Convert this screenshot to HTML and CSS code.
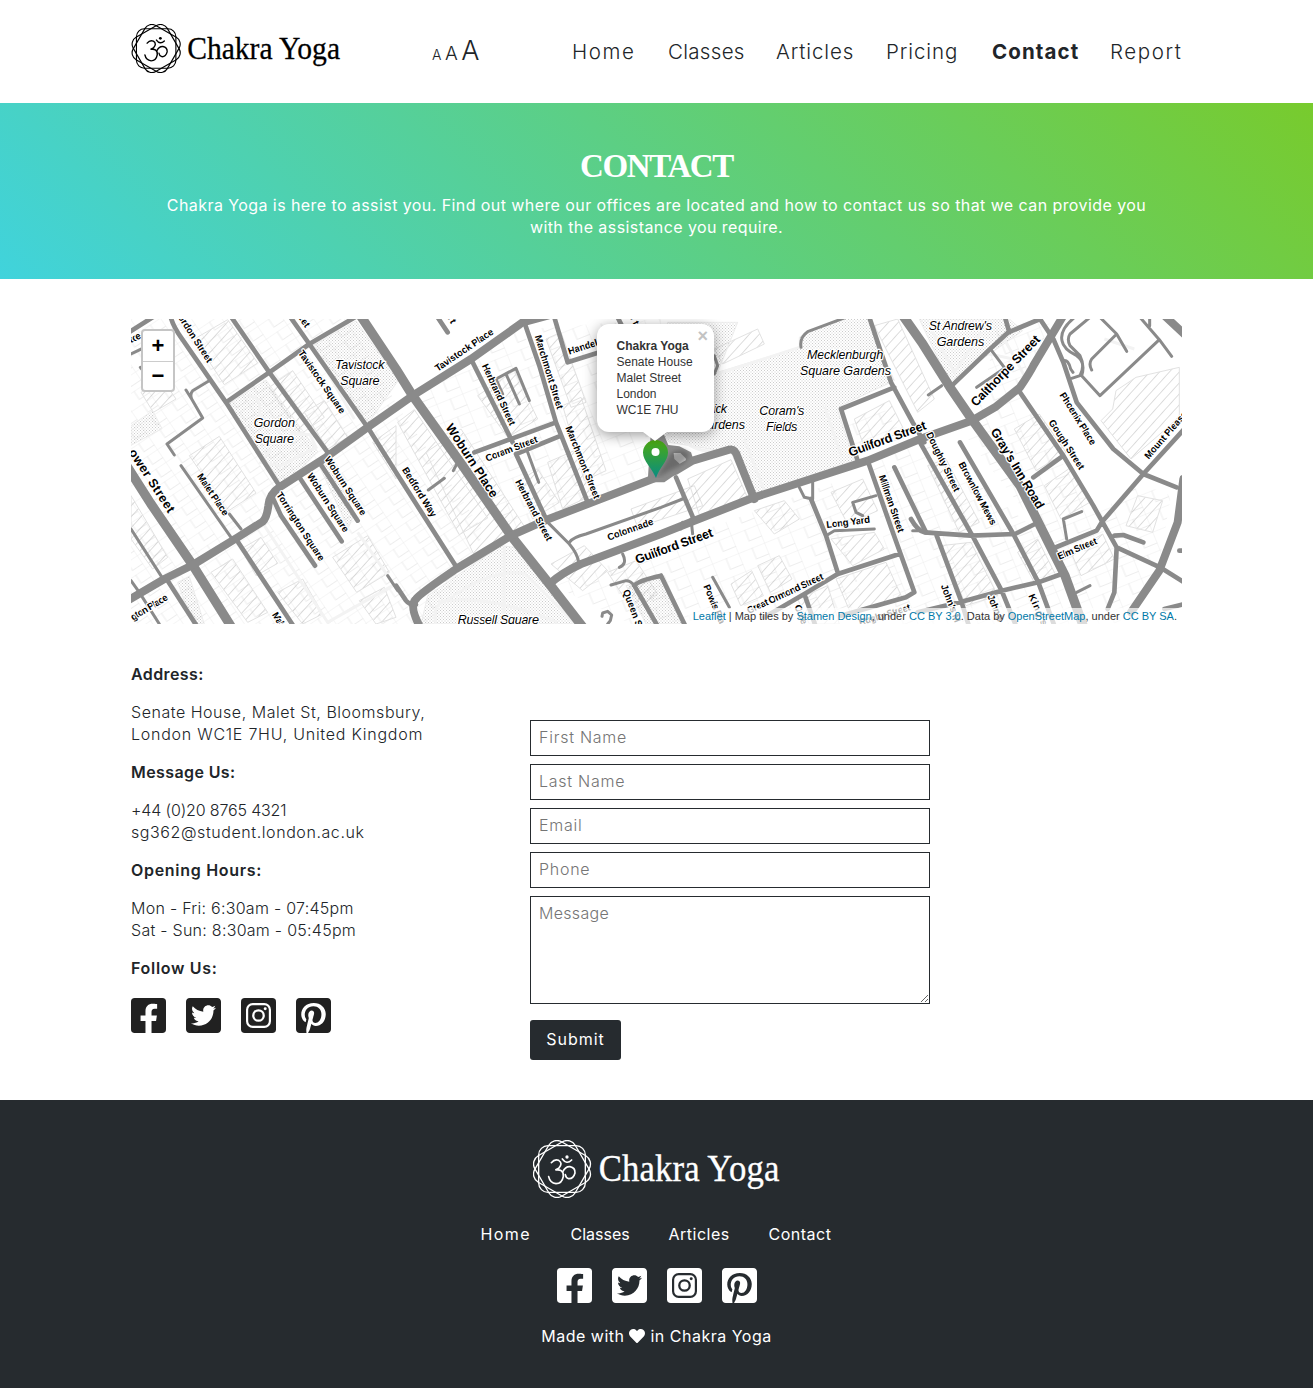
FILE: index.html
```html
<!DOCTYPE html>
<html lang="en">
<head>
<meta charset="utf-8">
<title>Chakra Yoga - Contact</title>
<link rel="stylesheet" href="styles.css">
</head>
<body>
<svg class="sprite" width="0" height="0" aria-hidden="true">
  <symbol id="logo" viewBox="39 30 741 174">
    <g fill="none" stroke="currentColor" stroke-width="4">
      <rect x="56" y="47" width="140" height="140" rx="28"/>
      <rect x="56" y="47" width="140" height="140" rx="28" transform="rotate(30 126 117)"/>
      <rect x="56" y="47" width="140" height="140" rx="28" transform="rotate(60 126 117)"/>
      <g stroke-width="5" stroke-linecap="round">
        <path d="M94 98Q104 86 116 91Q130 100 116 115L106 120Q131 116 130 139Q126 161 108 161Q90 159 86 140"/>
        <path d="M128 126Q136 109 150 110Q166 113 165 129Q160 147 146 146Q137 143 136 134"/>
        <path d="M127 87Q140 105 155 90"/>
      </g>
    </g>
    <circle cx="141" cy="81" r="5" fill="currentColor"/>
    <text x="236" y="153" font-size="112" textLength="543" lengthAdjust="spacingAndGlyphs" fill="currentColor" stroke="currentColor" stroke-width="1" font-family="Liberation Serif, serif">Chakra Yoga</text>
  </symbol>
  <symbol id="facebook" viewBox="0 32 448 448"><path fill="currentColor" d="M400 32H48A48 48 0 0 0 0 80v352a48 48 0 0 0 48 48h137.25V327.69h-63V256h63v-54.64c0-62.15 37-96.48 93.67-96.48 27.14 0 55.52 4.84 55.52 4.84v61h-31.27c-30.81 0-40.42 19.12-40.42 38.73V256h68.78l-11 71.69h-57.78V480H400a48 48 0 0 0 48-48V80a48 48 0 0 0-48-48z"/></symbol>
  <symbol id="twitter" viewBox="0 32 448 448"><path fill="currentColor" d="M400 32H48C21.5 32 0 53.5 0 80v352c0 26.5 21.5 48 48 48h352c26.5 0 48-21.5 48-48V80c0-26.5-21.5-48-48-48zm-48.900 158.800c.2 2.800.2 5.700.2 8.500 0 86.700-66 186.600-186.600 186.600-37.200 0-71.700-10.800-100.700-29.400 5.300.6 10.400.8 15.800.8 30.700 0 58.900-10.400 81.400-28-28.800-.6-53-19.500-61.300-45.500 10.100 1.500 19.200 1.500 29.600-1.200-30-6.100-52.500-32.500-52.500-64.400v-.8c8.700 4.900 18.900 7.900 29.600 8.300a65.447 65.447 0 0 1-29.200-54.600c0-12.200 3.200-23.400 8.900-33.100 32.300 39.800 80.800 65.800 135.200 68.600-9.300-44.500 24-80.600 64-80.600 18.900 0 35.900 7.900 47.900 20.700 14.800-2.800 29-8.300 41.600-15.800-4.900 15.200-15.200 28-28.800 36.100 13.200-1.400 26-5.100 37.800-10.200-8.900 13.100-20.100 24.700-32.900 34z"/></symbol>
  <symbol id="instagram" viewBox="0 32 448 448">
    <rect y="32" width="448" height="448" rx="48" fill="currentColor"/>
    <g fill="none" stroke="var(--cut)"><rect x="78" y="110" width="292" height="292" rx="72" stroke-width="28"/><circle cx="224" cy="256" r="67" stroke-width="29"/></g>
    <circle cx="310" cy="170" r="19" fill="var(--cut)"/>
  </symbol>
  <symbol id="pinterest" viewBox="0 32 448 448"><path fill="currentColor" d="M448 80v352c0 26.500-21.500 48-48 48H154.400c9.800-16.400 22.400-40 27.400-59.300 3-11.500 15.300-58.400 15.300-58.400 8 15.300 31.400 28.200 56.300 28.200 74.100 0 127.400-68.100 127.400-152.700 0-81.100-66.200-141.800-151.400-141.800-106 0-162.200 71.100-162.200 148.600 0 36 19.200 80.800 49.800 95.100 4.700 2.200 7.100 1.200 8.200-3.300.8-3.400 5-20.100 6.800-27.800.6-2.500.3-4.600-1.700-7-10.100-12.300-18.300-34.900-18.300-56 0-54.200 41-106.600 110.900-106.600 60.300 0 102.600 41.100 102.600 99.900 0 66.400-33.500 112.400-77.200 112.400-24.100 0-42.100-19.900-36.400-44.400 6.900-29.200 20.300-60.700 20.300-81.800 0-53-75.500-45.700-75.500 25 0 21.700 7.300 36.500 7.300 36.500-31.400 132.800-36.100 134.500-29.600 192.600l2.200.8H48c-26.500 0-48-21.500-48-48V80c0-26.500 21.500-48 48-48h352c26.500 0 48 21.500 48 48z"/></symbol>
</svg>

<header class="header">
  <div class="container header-row">
    <a class="brand"><svg><use href="#logo"/></svg></a>
    <div class="sizes"><span class="size-s">A</span><span class="size-m">A</span><span class="size-l">A</span></div>
    <nav class="nav"><a class="wide">Home</a><a class="tight">Classes</a><a>Articles</a><a>Pricing</a><a class="active">Contact</a><a class="wide">Report</a></nav>
  </div>
</header>

<section class="banner">
  <h1>CONTACT</h1>
  <p>Chakra Yoga is here to assist you. Find out where our offices are located and how to contact us so that we can provide you<br>with the assistance you require.</p>
</section>

<main class="container">
  <div class="map">
    <svg class="tiles" viewBox="0 0 3153 915">
      <defs>
        <pattern id="dots" width="9" height="9" patternUnits="userSpaceOnUse"><path d="M0 0h3v3H0zM4.500 4.500h3v3h-3z" fill="#ccc"/></pattern>
        <pattern id="hatch" width="22" height="26" patternUnits="userSpaceOnUse" patternTransform="rotate(42)"><path d="M0 0V26" stroke="#bbb" stroke-width="3"/></pattern>
        <pattern id="lots" width="76" height="46" patternUnits="userSpaceOnUse" patternTransform="rotate(-34)"><path d="M0 0H76V46M38 0V30H76" fill="none" stroke="#ededed" stroke-width="3"/></pattern>
        <pattern id="lots2" width="84" height="58" patternUnits="userSpaceOnUse" patternTransform="rotate(-22)"><path d="M0 0H84V58M42 0V36H84" fill="none" stroke="#ededed" stroke-width="3"/></pattern>
      </defs>
      <path fill="url(#lots)" d="M0 0H650L800 260L1060 640L900 915H0Z"/>
      <path fill="url(#lots2)" d="M850 240L1170 20L1370 550L1150 640ZM1190 30L1590 0V450L1380 540ZM1270 800L1590 680L2110 490L2200 880L1500 915ZM2130 320L2260 270L2320 360L2160 410ZM2220 430L2380 370L2790 690L2850 915H2300ZM2480 320L2660 220L2900 600L2770 690ZM2600 20L2760 0L2690 200L2540 290ZM2770 690L3020 490L3120 530L3080 760L2960 915H2850Z"/>
      <g class="building">
        <path d="M190 60l100-58 90 130-100 65zM30 220l60-45 45 65-68 40zM0 530l45 75 65 110-45 35L0 660zM175 410l90-58 110 170-85 55zM415 205l70-50 95 140-70 50zM520 280l60-35 70 110-60 35zM330 690l60-35 50 78-65 37zM240 760l65-40 105 160-60 30zM605 715l105-65 65 110-98 60zM440 820l75-40 60 105-60 30zM685 845l75-40 35 90-60 20zM725 370l70-50v160z"/>
        <path d="M885 400l105-70 195 300-150 90zM800 310l50-38 220 325-85 50zM1040 230l110-75 70 145-90 55zM1245 60l45-20 75 210-45 15zM1295 260l55-25 75 220-65 30zM1250 430l80-35 60 130-95 45zM1160 490l60-40 65 100-80 50zM1260 735l100-55 70 75-75 60zM1500 570l190-70 25 60-195 65zM1430 760l85-35 65 100-75 50z"/>
        <path d="M1670 480l130-58 50 115-145 50zM1750 90l130-60 20 45-125 60zM1870 575l90-30 45 55-75 45zM1880 740l65-30 38 70-65 40zM1800 795l62-40 35 75-68 30zM2100 520l95-40 45 95-90 40zM2115 780l150-50 50 110-155 45zM2100 660l130-20 30 50-95 50zM2170 300l105-55 45 90-120 50zM2000 840l90-40 35 115h-90z"/>
        <path d="M2390 440l55-20 100 190-60 30zM2230 20l70-20 110 240-50 40zM2650 330l75-45 80 115-90 55zM2740 500l80-55 65 100-95 55zM2430 680l90-10 80 160-95 30zM2660 700l60-40 55 110-65 20zM2910 305l35-35 10-55 60-40 130-30v150l-145 125zM3020 530l75 15-30 95-80-20zM2820 700l95-55 35 75-100 50z"/>
      </g>
      <g class="park">
        <path d="M292 255l113-72 155 215-103 104zM548 78L675 6l127 178-98 140zM562 435l30-9 78 156-18 45zM0 320l65-45 28 54-93 50zM140 790l35-18 45 143h-35z"/>
        <path d="M890 830l220-150 65 8 160 227H870zM1610 10h210l-60 150 245-75 0-30 30-20 110-40h65l80 190-150 70-20 20 50 150-310 105-60-130-185-30-55-65zM1600 770l60 145h-115l-60-115zM2365 0h270l40 35-220 155z"/>
      </g>
      <g class="paths">
        <path d="M350 230q45 0 34 60 50 20 72 70M420 390l-30 40 60 10 105-55-18-38-60-5M555 100l115 200M400 620l190 290 195-110M680 640l90 130M915 915q-15-60 35-72 130-95 230-80 110 105 150 152M1120 685l-2 230M920 850q140-30 360 60M1640 350q70 70 155 35M1760 165L2005 85M1840 360l60 155M2080 260l50 150M2400 30l70 130 80-120"/>
        <path d="M1590 170q80 80 20 190M2575 105l95 20M2620 60l60 110M2920 60l90 30"/>
      </g>
      <g class="roads">
        <g stroke-width="28"><path d="M-10 445L60 555 185 738 305 930M685-15L795 150 845 230 995 440 1140 650 1255 795 1360 930M2312-15L2372 70 2457 205 2522 300 2667 500 2717 600 2767 700 2802 770 2860 930"/></g>
        <g stroke-width="24">
          <path d="M-10 845L100 780 185 738 320 655 395 608Q408 595 412 560 415 525 445 505L585 415 710 325 845 230 1020 120 1175 10 1250-10"/>
          <path d="M870 930Q832 860 855 840 865 825 975 750L1140 650 1245 603 1370 555 1590 470 1635 455 1685 425 1795 392Q1812 388 1820 415L1870 540"/>
          <path d="M1255 795Q1295 760 1350 735L1590 645 1690 605 1870 535 2040 480 2210 425 2367 360 2522 305 2592 265 2667 205Q2697 160 2707 140L2797-10M3157 480L3140 610 3085 755 3000 880M3095-15L3165 50"/>
        </g>
        <path fill="#8a8a8a" fill-rule="evenodd" stroke="none" d="M1560 330L1598 345 1612 378 1645 382 1680 400 1690 430 1650 455 1600 490 1550 490ZM1628 402L1630 420 1650 438 1666 434 1664 418 1648 402Z"/>
        <g stroke-width="14">
          <path d="M118-10Q125 20 150 55L285 250 445 500M298-10L415 160 590 400M475-10L535 75 710 325 795 460 980 750M285 250L415 160 535 75 680-10M420 525L450 590 552 740M505 475L632 667M565 430L680 605M315 660L490 925M110 785L200 925M-10 42L65-5M795 800L825 845Q835 858 855 857"/>
          <path d="M1020 120L1080 240 1145 370M1155 405L1245 600M1030 400L1145 358 1275 310M1155 405L1290 350M1180 10L1225 140 1275 310 1370 550M1270-5L1310 130 1420 95M1460-5L1475 25M920-5L950 40M1590 770L1665 925M1510 800L1585 930M1510 800Q1520 785 1590 770M1635 475L1690 605M2215-5L2280 190 2345 310 2380 370M2290 205L2130 270 2180 425M2210 425L2280 625 2350 820 2325 835 2130 890M2290 445L2385 640M2040 540L2085 650 2120 760M1900 895L2020 825 2120 765 2305 705M2020 825L2055 925"/>
          <path d="M2367 370L2527 655 2612 815 2657 925M2487 370L2647 645 2722 790 2772 925M2340 600Q2360 635 2380 640L2520 650 2652 645 2712 615M2417 650L2492 850 2515 925M2360 880L2492 848 2612 815 2722 790 2792 765M2457 205L2572 95 2632 40 2727 0M2622-5L2635 40M2727 0L2767 60 2797 130 2837 250 2947 390 3037 465 3137 505M2667 220L2797 410 2887 560 2957 685 3087 745 3160 790M2797 410L2707 475M2762 690L2897 635 2912 610 3037 465 3160 330M2957 685L2950 820 2930 870M2950 650L2977 648 3037 670M3100 870L3160 855M3145 695H3165"/>
        </g>
        <g stroke-width="9">
          <path d="M150 440L300 655M295 585L330 630M232 187L185 215Q176 225 182 240L215 297 108 375 130 408M165 213L182 240M0 630L95 778M0 785L25 820L85 915M0 105L35 88M770 770L800 815M28 145L40 160"/>
          <path d="M1245 605L1315 675Q1340 705 1343 730M1315 670Q1325 655 1365 645L1590 565 1655 540M1095 180L1155 148 1195 245M1125 165L1165 255M1095 180L1115 225M1190 400L1223 490M892 513L940 478M967 455L980 430M1440 798L1485 785Q1500 785 1510 800M1475 705Q1490 735 1465 745"/>
          <path d="M1413 892L1415 882 1430 877 1442 888 1438 905 1430 915"/>
          <path d="M1750 110L1760 140 1750 165M2010 85Q2005 55 2030 38L2145-5M2005 505L2020 535 2045 540 2045 485M2085 650L2110 635 2230 630M2235 530L2165 550 2175 580 2195 590M1745 775L1795 865M2345 635H2385M1650 630L1655 610M1685 645L1680 600"/>
          <path d="M2582 95L2627 155M2537 205L2617 150M2837-10Q2785 30 2793 65 2797 90 2837 110 2867 130 2847 170L2822 178M2877-5L2817 45Q2807 60 2817 80L2847 110Q2862 140 2852 170L2907 230 3085 62 3027-5M3085 62L3122 112M2907-5L2957 45 2987 97M2957 45L2882 120Q2872 135 2882 153M2797 125Q2812 120 2819 150L2826 160M2852 578L2797 600 2807 660M2837 820L2877 800M2392 228L2432 200M3056-5V20"/>
        </g>
      </g>
      <g class="street">
        <text transform="translate(140 -5) rotate(57)" textLength="165">ordon Street</text>
        <text transform="translate(500 -5) rotate(55)" textLength="40">eet</text>
        <text transform="translate(500 102) rotate(55)" textLength="225">Tavistock Square</text>
        <text transform="translate(197 472) rotate(56)" textLength="145">Malet Place</text>
        <text transform="translate(435 527) rotate(57)" textLength="240">Torrington Square</text>
        <text transform="translate(527 470) rotate(57)" textLength="205">Woburn Square</text>
        <text transform="translate(580 420) rotate(57)" textLength="205">Woburn Square</text>
        <text transform="translate(6 905) rotate(-31)" textLength="125">gton Place</text>
        <text transform="translate(0 72) rotate(-25)" textLength="35">ace</text>
        <text transform="translate(422 887) rotate(58)" textLength="60">Malet</text>
        <text transform="translate(920 158) rotate(-34)" textLength="205">Tavistock Place</text>
        <text transform="translate(1052 140) rotate(65)" textLength="200">Herbrand Street</text>
        <text transform="translate(1211 52) rotate(73)" textLength="230">Marchmont Street</text>
        <text transform="translate(1303 326) rotate(68)" textLength="232">Marchmont Street</text>
        <text transform="translate(1068 428) rotate(-21)" textLength="165">Coram Street</text>
        <text transform="translate(1152 488) rotate(62)" textLength="204">Herbrand Street</text>
        <text transform="translate(812 452) rotate(58)" textLength="170">Bedford Way</text>
        <text transform="translate(1315 107) rotate(-18)" textLength="125">Handel St</text>
        <text transform="translate(945 -10) rotate(60)" textLength="30">et</text>
        <text transform="translate(1493 -12) rotate(65)" textLength="35">nt</text>
        <text transform="translate(1433 665) rotate(-20)" textLength="145">Colonnade</text>
        <text transform="translate(1475 816) rotate(69)" textLength="135">Queen Sq</text>
        <text transform="translate(1717 802) rotate(67)" textLength="125">Powis Pla</text>
        <text transform="translate(1853 885) rotate(-25)" textLength="250">Great Ormond Street</text>
        <text transform="translate(2087 627) rotate(-7)" textLength="132">Long Yard</text>
        <text transform="translate(2243 472) rotate(71)" textLength="180">Millman Street</text>
        <text transform="translate(1990 862) rotate(68)" textLength="60">Orde</text>
        <text transform="translate(2187 920) rotate(-17)" textLength="160">Rugby Street</text>
        <text transform="translate(2385 345) rotate(64)" textLength="195">Doughty Street</text>
        <text transform="translate(2482 435) rotate(62)" textLength="210">Brownlow Mews</text>
        <text transform="translate(2785 228) rotate(58)" textLength="180">Phoenix Place</text>
        <text transform="translate(2752 310) rotate(57)" textLength="172">Gough Street</text>
        <text transform="translate(3053 422) rotate(-49)" textLength="205">Mount Pleasant</text>
        <text transform="translate(2785 722) rotate(-23)" textLength="125">Elm Street</text>
        <text transform="translate(2429 800) rotate(69)" textLength="120">John's M</text>
        <text transform="translate(2569 832) rotate(68)" textLength="85">John S</text>
        <text transform="translate(2692 830) rotate(66)" textLength="100">King's</text>
      </g>
      <g class="street main">
        <text transform="translate(-8 400) rotate(57)" textLength="220">ower Street</text>
        <text transform="translate(943 325) rotate(57)" textLength="255">Woburn Place</text>
        <text transform="translate(1518 735) rotate(-20)" textLength="245">Guilford Street</text>
        <text transform="translate(2158 413) rotate(-20)" textLength="245">Guilford Street</text>
        <text transform="translate(2535 265) rotate(-46)" textLength="280">Calthorpe Street</text>
        <text transform="translate(2578 337) rotate(59)" textLength="275">Gray's Inn Road</text>
      </g>
      <g class="place">
        <text x="612" y="150" textLength="149">Tavistock</text><text x="628" y="198" textLength="118">Square</text>
        <text x="368" y="325" textLength="124">Gordon</text><text x="371" y="373" textLength="118">Square</text>
        <text x="980" y="914" textLength="244">Russell Square</text>
        <text x="1748" y="283" textLength="40">ick</text><text x="1729" y="331" textLength="113">ardens</text>
        <text x="1885" y="289" textLength="135">Coram's</text><text x="1905" y="337" textLength="94">Fields</text>
        <text x="2028" y="119" textLength="229">Mecklenburgh</text><text x="2007" y="167" textLength="273">Square Gardens</text>
        <text x="2393" y="32" textLength="190">St Andrew's</text><text x="2417" y="80" textLength="143">Gardens</text>
      </g>
    </svg>
    <div class="zoom-control"><a>+</a><a>−</a></div>
    <svg class="marker" viewBox="0 0 56 38">
      <defs><linearGradient id="pin" x1="0" y1="0" x2="0" y2="1"><stop offset="0" stop-color="#4daa10"/><stop offset="1" stop-color="#078d83"/></linearGradient><filter id="soft"><feGaussianBlur stdDeviation="2"/></filter></defs>
      <path d="M13 38L28 13Q42 6 46 15 44 24 30 29Z" fill="#555" opacity=".6" filter="url(#soft)"/>
      <path d="M13 38C9 28 0 21 0 12.500A12.500 12.500 0 0 1 25 12.500C25 21 16 28 13 38Z" fill="url(#pin)"/>
      <circle cx="12.500" cy="12" r="4" fill="#fff"/>
    </svg>
    <div class="popup"><b>Chakra Yoga</b><br>Senate House<br>Malet Street<br>London<br>WC1E 7HU<span class="close">×</span></div>
    <div class="attribution"><a>Leaflet</a> | Map tiles by <a>Stamen Design</a>, under <a>CC BY 3.0</a>. Data by <a>OpenStreetMap</a>, under <a>CC BY SA</a>.</div>
  </div>

  <div class="details">
    <section class="info">
      <p><b>Address:</b></p>
      <p><span class="t-street">Senate House, Malet St, Bloomsbury,</span><br><span class="t-city">London WC1E 7HU, United Kingdom</span></p>
      <p><b>Message Us:</b></p>
      <p><span class="t-phone">+44 (0)20 8765 4321</span><br><span class="t-mail">sg362@student.london.ac.uk</span></p>
      <p><b class="t-title">Opening Hours:</b></p>
      <p class="t-hours">Mon - Fri: 6:30am - 07:45pm<br>Sat - Sun: 8:30am - 05:45pm</p>
      <p><b class="t-title">Follow Us:</b></p>
      <div class="social"><svg><use href="#facebook"/></svg><svg><use href="#twitter"/></svg><svg><use href="#instagram"/></svg><svg><use href="#pinterest"/></svg></div>
    </section>
    <form class="form">
      <input placeholder="First Name">
      <input placeholder="Last Name">
      <input placeholder="Email">
      <input placeholder="Phone">
      <textarea placeholder="Message"></textarea>
      <button type="button">Submit</button>
    </form>
  </div>
</main>

<footer class="footer">
  <svg class="footer-logo"><use href="#logo"/></svg>
  <nav class="footer-nav"><a class="wide">Home</a><a class="tight">Classes</a><a>Articles</a><a>Contact</a></nav>
  <div class="social"><svg><use href="#facebook"/></svg><svg><use href="#twitter"/></svg><svg><use href="#instagram"/></svg><svg><use href="#pinterest"/></svg></div>
  <p class="made">Made with <svg viewBox="0 0 512 512"><path fill="currentColor" d="M462.300 62.600C407.500 15.900 326 24.300 275.700 76.200L256 96.500l-19.700-20.300C186.100 24.300 104.500 15.900 49.700 62.600c-62.800 53.600-66.100 149.800-9.900 207.900l193.500 199.800c12.500 12.900 32.800 12.900 45.300 0l193.500-199.800c56.300-58.100 53-154.300-9.800-207.900z"/></svg> in Chakra Yoga</p>
</footer>
</body>
</html>
```
FILE: styles.css
```css
* { box-sizing: border-box; }
body { margin: 0; font: 300 16px/22px Inter, "Open Sans", sans-serif; color: #212529; background: #fff; }
p { margin: 0 0 16px; }
.sprite { display: block; height: 0; }
.container { width: 1051px; margin: 0 auto; }

.header { height: 103px; padding-top: 24px; }
.header-row { display: flex; white-space: nowrap; }
.brand { width: 301px; color: #000; }
.brand svg { display: block; width: 210px; height: 49px; }
.sizes { display: flex; align-items: baseline; gap: 3.5px; width: 140px; line-height: 54px; }
.size-s { font-size: 14px; }
.size-m { font-size: 19px; }
.size-l { font-size: 27px; }
.nav { display: grid; grid-template-columns: 64px 76px 78px 74px 86px 72px; gap: 32px; font-size: 20.5px; line-height: 56px; letter-spacing: .9px; }
.nav .active { font-weight: 700; letter-spacing: 1.1px; }
.nav .wide { letter-spacing: 1.6px; }
.nav .tight { letter-spacing: .3px; }

.banner { height: 176px; padding-top: 43px; text-align: center; color: #fff; background: linear-gradient(45deg, #40d3dc, #78cb2d); font-weight: 400; letter-spacing: .42px; }
.banner h1 { margin: 0 0 8px; font: 700 33px/40px "Liberation Serif", serif; letter-spacing: -1.4px; }
.banner p { white-space: nowrap; }

.map { position: relative; height: 305px; margin-top: 40px; overflow: hidden; font: 12px/16px "Liberation Sans", Arial, sans-serif; color: #333; }
.tiles { display: block; width: 1051px; height: 305px; }
.building path { fill: url(#hatch); stroke: #e2e2e2; stroke-width: 3; }
.park path { fill: url(#dots); stroke: #ededed; stroke-width: 3; }
.paths path { fill: none; stroke: #f3f3f3; stroke-width: 9; }
.roads { fill: none; stroke: #8a8a8a; stroke-linejoin: round; stroke-linecap: round; }
.tiles text { font-family: "Liberation Sans", Arial, sans-serif; fill: #000; stroke: #fff; stroke-width: 7px; paint-order: stroke; stroke-linejoin: round; }
.street text { font-size: 29px; font-weight: 700; }
.street.main text { font-size: 38px; }
.place text { font-size: 38px; font-style: italic; }
.zoom-control { position: absolute; left: 10px; top: 10px; width: 34px; border: 2px solid #c5c5c5; border-radius: 4px; background: #fff; }
.zoom-control a { display: block; height: 30px; font: 700 22px/30px "Liberation Sans", Arial, sans-serif; text-align: center; color: #000; }
.zoom-control a + a { height: 29px; line-height: 28px; border-top: 1px solid #ccc; }
.marker { position: absolute; left: 512px; top: 121px; width: 56px; height: 38px; }
.popup { position: absolute; left: 466px; top: 5px; width: 117px; height: 108px; padding: 14px 0 0 19.5px; border-radius: 12px; background: #fff; box-shadow: 0 3px 14px rgba(0, 0, 0, .4); }
.popup::after { content: ""; position: absolute; left: 46px; top: 108px; border: 12px solid transparent; border-top: 9px solid #fff; border-bottom: 0; }
.close { position: absolute; right: 6px; top: 3px; font: 700 18px/18px "Liberation Sans", Arial, sans-serif; color: #c3c3c3; }
.attribution { position: absolute; right: 0; bottom: 0; padding: 0 5px; font-size: 11px; background: rgba(255, 255, 255, .7); white-space: nowrap; }
.attribution a { color: #0078a8; }

.details { display: flex; padding-top: 39px; height: 476px; }
.info { width: 399px; }
.info p { white-space: nowrap; }
.info b { font-weight: 600; letter-spacing: .4px; }
.info .t-title { letter-spacing: .7px; }
.t-street { letter-spacing: .53px; }
.t-city { letter-spacing: .75px; }
.t-phone { letter-spacing: -.15px; }
.t-mail { letter-spacing: .58px; }
.t-hours { letter-spacing: .27px; }
.social { display: flex; gap: 20px; --cut: #fff; color: #212121; }
.social svg { width: 35px; height: 35px; }
.info .social { margin-top: 19px; }
.form { width: 400px; padding-top: 57px; display: flex; flex-direction: column; align-items: flex-start; gap: 8px; }
.form input, .form textarea { display: block; width: 400px; height: 36px; margin: 0; padding: 0 8px 2px; border: 1px solid #262b2f; border-radius: 0; font: inherit; letter-spacing: .75px; background: #fff; }
.form textarea { height: 108px; padding: 5px 8px; letter-spacing: .3px; }
.form ::placeholder { color: #757575; opacity: 1; }
.form button { width: 91px; height: 40px; margin-top: 8px; padding: 0 0 2px; border: 0; border-radius: 3px; font: 400 16px/22px Inter, sans-serif; letter-spacing: 1px; color: #fff; background: #262b2f; }

.footer { height: 288px; padding-top: 40px; display: flex; flex-direction: column; align-items: center; color: #fff; background: #262b2f; font-weight: 400; letter-spacing: .5px; }
.footer-logo { width: 247px; height: 58px; }
.footer-nav { display: grid; grid-template-columns: 50px 58px 60px 64px; gap: 40px; margin: 25px 0 23px; }
.footer-nav .wide { letter-spacing: 1.4px; }
.footer-nav .tight { letter-spacing: 0; }
.footer .social { color: #fff; --cut: #262b2f; }
.made { margin: 22px 0 0; white-space: nowrap; }
.made svg { width: 16px; height: 16px; vertical-align: -2px; }
```
